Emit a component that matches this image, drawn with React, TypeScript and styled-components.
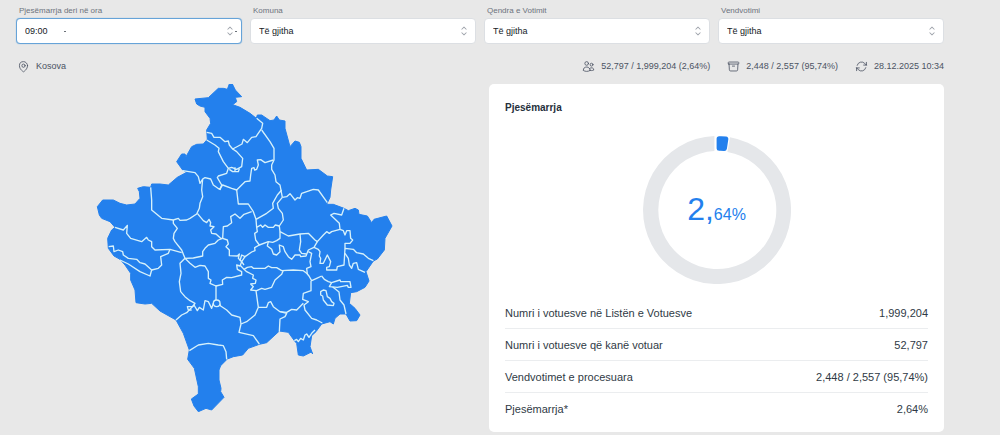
import React, { useId } from "react";
import styled, { createGlobalStyle } from "styled-components";
import {
  HiChevronUpDown,
  HiOutlineArchiveBox,
  HiOutlineArrowPath,
  HiOutlineMapPin,
  HiOutlineUsers,
} from "react-icons/hi2";

const color = {
  page: "#e8e8e8",
  blue: "#2380ed",
  border: "#dcdfe3",
  focus: "#66a3d8",
  ring: "#e5e7ea",
  label: "#6d737d",
  meta: "#4b5363",
  text: "#2f3a45",
};

const GlobalStyle = createGlobalStyle`
  *, *::before, *::after { box-sizing: border-box; }
  body {
    margin: 0;
    background: ${color.page};
    color: ${color.text};
    font-family: "Liberation Sans", Arial, sans-serif;
  }
`;

const Page = styled.main`
  padding: 5px 56px 0 16px;
`;

const Filters = styled.form`
  display: grid;
  grid-template-columns: repeat(4, 1fr);
  gap: 8px;
`;

const Field = styled.div`
  display: flex;
  flex-direction: column;
  gap: 2px;
`;

const FieldLabel = styled.label`
  padding-left: 3px;
  font-size: 8px;
  line-height: 11px;
  color: ${color.label};
`;

const SelectBox = styled.div`
  position: relative;
  display: grid;

  svg {
    position: absolute;
    right: 5px;
    top: 6px;
    width: 14px;
    height: 14px;
    color: #9a9fa7;
    pointer-events: none;
  }
`;

const Select = styled.select<{ $active?: boolean }>`
  appearance: none;
  width: 100%;
  height: 26px;
  padding: 0 24px 0 8px;
  border: 1px solid ${(p) => (p.$active ? color.focus : color.border)};
  border-radius: 4px;
  background: #fff;
  box-shadow: ${(p) => (p.$active ? `0 0 1px ${color.focus}` : "none")};
  color: #15191e;
  font-family: inherit;
  font-size: 9px;
  outline: none;
`;

const Dot = styled.span<{ $side: "left" | "right" }>`
  position: absolute;
  top: 13px;
  ${(p) => (p.$side === "left" ? "left: 48px;" : "right: 5px;")}
  width: 2px;
  height: 1px;
  background: #6b7178;
`;

const MetaBar = styled.div`
  display: flex;
  align-items: center;
  justify-content: space-between;
  padding: 14px 0 10px 1px;
`;

const MetaGroup = styled.div`
  display: flex;
  gap: 17px;
`;

const MetaItem = styled.span`
  display: flex;
  align-items: center;
  gap: 6px;
  font-size: 9px;
  line-height: 16px;
  color: ${color.meta};

  svg {
    width: 13px;
    height: 13px;
  }
`;

const Columns = styled.div`
  display: grid;
  grid-template-columns: 1fr 1fr;
  gap: 18px;
`;

const MapArea = styled.section`
  display: flex;
  justify-content: center;
  align-items: flex-start;

  svg {
    width: 100%;
    max-width: 300px;
  }
`;

const Card = styled.section`
  padding: 16px 16px 8px;
  border-radius: 5px;
  background: #fff;
`;

const CardTitle = styled.h2`
  margin: 0;
  font-size: 10px;
  line-height: 16px;
  color: #252f3b;
`;

const Chart = styled.div`
  display: grid;
  place-items: center;
  padding: 20px 0 13px;

  > * {
    grid-area: 1 / 1;
  }
`;

const Percent = styled.div`
  padding-top: 4px;
  color: ${color.blue};
  font-size: 32px;
  line-height: 36px;

  small {
    font-size: 16px;
  }
`;

const Stats = styled.table`
  width: 100%;
  border-collapse: collapse;
  font-size: 11px;
  line-height: 16px;

  tr + tr {
    border-top: 1px solid #ebedef;
  }

  th,
  td {
    padding: 8px 0 7px;
    font-weight: 400;
    text-align: left;
  }

  td {
    text-align: right;
  }
`;

const outline =
  "M418 12L427 12 436 30 455 50 436 52 440 65 428 74 450 82 480 100 499 115 502 105 515 105 540 122 552 120 560 108 568 120 585 123 585 145 600 200 615 183 628 187 633 200 633 235 650 270 685 268 712 288 728 290 722 330 720 352 710 373 730 373 762 385 775 392 795 385 805 390 807 403 832 408 845 428 852 418 890 408 906 438 885 475 883 510 862 537 850 543 828 575 837 603 825 622 800 635 782 638 778 670 795 685 810 705 800 722 780 723 768 702 750 702 735 715 730 732 720 725 695 732 678 755 665 767 660 800 668 822 664 816 640 828 625 825 620 790 613 782 595 757 568 753 530 788 508 793 475 805 458 825 430 830 412 837 392 857 387 870 387 900 393 925 392 935 402 952 365 990 348 985 325 995 312 978 304 957 325 942 325 920 313 865 293 838 298 810 280 760 258 720 210 693 185 670 165 672 138 668 135 630 122 600 122 580 105 555 90 538 72 528 55 505 53 475 65 450 75 442 60 425 35 415 28 405 22 380 38 360 70 360 90 370 110 375 135 372 150 355 148 335 143 325 160 320 182 322 185 312 210 312 235 315 262 292 290 277 278 270 260 245 275 222 285 222 288 230 305 200 320 193 340 192 352 178 350 150 362 130 360 115 345 95 345 82 330 78 320 72 315 57 355 53 385 25 400 25 412 28Z";

const borders = [
  "M350 157L365 160 372 172 390 172 405 185 415 183 418 195 428 207 445 198 456 192 460 178 472 188 485 172 498 170 515 145 518 130 500 115",
  "M350 180L375 195 387 205 385 215 400 245 415 265 410 280 385 288 382 293 395 315 390 330",
  "M428 207L440 215 458 235 455 260 440 268 425 262 415 265M418 268L428 275 445 275 448 266M435 262L435 275",
  "M278 272L315 278 325 290 330 310 338 297 345 293 362 297 370 315 388 328 398 315 425 325 440 330 455 315 465 305 480 303 482 285 485 265 492 263 494 270 500 268 505 255 502 240 512 239 525 248 550 240",
  "M515 150L540 185 552 205 552 240 545 255 545 268 555 285 558 305 570 315 577 352",
  "M182 322L185 360 185 390 215 415 250 420 265 415 270 421 290 420 300 415 320 402 328 385 330 370 338 350 335 330 338 297",
  "M322 400L340 422 350 428 357 418 362 428 360 438 372 440 362 450 365 460 378 462 392 475 398 475",
  "M398 475L400 440 412 438 425 428 422 410 435 402 450 415 462 403 485 395",
  "M440 330L443 355 445 372 475 372 490 395 498 418 530 400 550 385 548 370 562 345 575 330",
  "M577 352L562 370 565 385 577 400 580 420 568 438 570 455 595 468 630 462 655 460 675 480 682 485 700 465 710 455 718 460 725 455 750 448 748 430 722 405 732 400 755 405 762 385",
  "M577 352L590 350 600 341 615 360 622 353 630 355 635 340 670 328 685 330 712 368",
  "M498 418L500 442 512 435 518 442 525 435 535 442 550 442 556 435 568 438M500 442L502 455 494 460 497 480 508 495 535 485 548 487 560 482 570 475 570 455",
  "M508 495L494 503 495 512 485 516 465 530 455 525 450 542",
  "M535 485L532 498 545 508 550 522 560 525 570 515 568 495 580 500 585 515 595 530 605 538 615 525 630 525 632 530 648 528 655 510 672 502 682 485",
  "M630 462L632 485 628 510 635 520 650 522",
  "M655 515L665 520 660 545 663 560 650 565 652 582 657 588 665 602 680 595 695 588",
  "M672 502L685 508 690 515 688 528 692 535 690 550 700 550 712 525 722 545 718 560 710 562 710 570 740 570 742 560 762 555 765 505 790 508 800 518 820 522 835 535 850 542",
  "M750 448L760 452 765 465 770 452 780 452 782 475 788 480 780 490 765 490 765 505",
  "M765 520L775 535 778 555 785 565 790 550 800 548 805 568 825 577",
  "M695 588L703 598 715 605 725 608",
  "M725 608L750 600 752 605 780 605 783 622 775 622 772 616 742 622 718 620 725 608",
  "M728 621L737 628 747 636 750 660 762 675 768 702",
  "M692 635L700 630 708 632 712 650 720 655 725 665 732 670 730 677 712 675 700 660 698 648 692 645Z",
  "M450 555L462 568 472 562 485 560 490 565 510 565 525 565 535 558 545 563 560 563 575 572 610 570 640 572 653 582",
  "M462 568L470 575 490 585 488 595 498 600 496 610 482 612 490 620 482 630 500 632 515 625 525 628 545 622 555 600 575 583 580 571",
  "M498 632L505 682 495 705 470 725 453 732 447 757 490 767 508 792",
  "M663 602L663 632 640 640 638 658 655 665 642 675 645 690 665 715 680 720 697 729",
  "M505 682L530 682 535 668 542 665 550 680 570 695 590 697 605 688 620 690 640 670",
  "M570 695L590 700 585 710 570 717 568 755",
  "M613 782L620 778 625 785 632 775 640 780 645 765 650 762 657 772 665 760 675 750",
  "M453 732L450 712 425 705 410 690 392 678 385 662 380 675 370 670 365 685 355 665 345 662 340 690 328 682 322 692 312 675 290 698 275 705 258 720",
  "M285 535L270 550 273 580 268 605 272 635 285 650 300 662 315 670 308 680 292 680 295 690 305 690",
  "M378 615L378 660",
  "M285 535L310 534 338 528 338 515 345 505 355 495 375 490 385 480 398 475",
  "M285 535L300 550 315 562 330 556 345 558 355 575 355 595 363 600 360 610 378 618 398 613 397 600 410 592 425 593 455 585 455 575 442 568 440 555 450 558 455 545 462 555",
  "M398 475L412 480 415 492 408 500 418 510 418 527 442 528 448 522 445 535 455 545 465 530",
  "M250 420L250 430 262 445 252 460 250 475 255 485 275 510 285 535",
  "M75 442L100 450 112 436 110 460 122 475 155 485 170 472 175 480 185 485 185 500 195 510 240 508 275 518",
  "M56 500L70 498 72 515 85 510 98 515 100 525 115 535 140 538 150 548 165 552 185 570 180 588 150 575 115 552 90 540",
  "M185 570L205 565 215 555 212 530 235 520 240 508",
  "M298 812L325 795 355 790 385 795 400 797 408 815 410 838",
];

function KosovoMap() {
  return (
    <svg viewBox="12 12 900 984" role="img" aria-label="Kosova">
      <path d={outline} fill={color.blue} stroke={color.blue} strokeWidth="3" strokeLinejoin="round" />
      <g fill="none" stroke="#d6f1fb" strokeWidth="4" strokeLinejoin="round">
        {borders.map((d) => (
          <path key={d} d={d} />
        ))}
        <circle cx="380" cy="670" r="10" fill={color.blue} />
      </g>
    </svg>
  );
}

function TurnoutRing() {
  return (
    <svg width="148" height="148" viewBox="-74 -74 148 148" aria-hidden="true">
      <path
        d="M13 -72.8A74 74 0 1 1 -2.6 -73.9L-2.6 -58.9A59 59 0 1 0 10.4 -58.1Z"
        fill={color.ring}
      />
      <path
        d="M2.2 -73.8Q6 -74 9 -73.4Q11.6 -73 11.3 -70.6L9.9 -61.3Q9.4 -58.8 7 -59Q4.6 -59.4 2.4 -59.3Q-.4 -59.2 -.4 -61.6L-.4 -71.2Q-.4 -73.7 2.2 -73.8Z"
        fill={color.blue}
      />
    </svg>
  );
}

interface FilterProps {
  label: string;
  value: string;
  active?: boolean;
}

function Filter({ label, value, active }: FilterProps) {
  const id = useId();
  return (
    <Field>
      <FieldLabel htmlFor={id}>{label}</FieldLabel>
      <SelectBox>
        <Select id={id} $active={active}>
          <option>{value}</option>
        </Select>
        <HiChevronUpDown />
        {active && (
          <>
            <Dot $side="left" />
            <Dot $side="right" />
          </>
        )}
      </SelectBox>
    </Field>
  );
}

const stats = [
  ["Numri i votuesve në Listën e Votuesve", "1,999,204"],
  ["Numri i votuesve që kanë votuar", "52,797"],
  ["Vendvotimet e procesuara", "2,448 / 2,557 (95,74%)"],
  ["Pjesëmarrja*", "2,64%"],
];

export default function App() {
  return (
    <>
      <GlobalStyle />
      <Page>
        <Filters>
          <Filter label="Pjesëmarrja deri në ora" value="09:00" active />
          <Filter label="Komuna" value="Të gjitha" />
          <Filter label="Qendra e Votimit" value="Të gjitha" />
          <Filter label="Vendvotimi" value="Të gjitha" />
        </Filters>
        <MetaBar>
          <MetaItem>
            <HiOutlineMapPin />
            Kosova
          </MetaItem>
          <MetaGroup>
            <MetaItem>
              <HiOutlineUsers />
              52,797 / 1,999,204 (2,64%)
            </MetaItem>
            <MetaItem>
              <HiOutlineArchiveBox />
              2,448 / 2,557 (95,74%)
            </MetaItem>
            <MetaItem>
              <HiOutlineArrowPath />
              28.12.2025 10:34
            </MetaItem>
          </MetaGroup>
        </MetaBar>
        <Columns>
          <MapArea>
            <KosovoMap />
          </MapArea>
          <Card>
            <CardTitle>Pjesëmarrja</CardTitle>
            <Chart>
              <TurnoutRing />
              <Percent>
                2,<small>64%</small>
              </Percent>
            </Chart>
            <Stats>
              <tbody>
                {stats.map(([name, value]) => (
                  <tr key={name}>
                    <th scope="row">{name}</th>
                    <td>{value}</td>
                  </tr>
                ))}
              </tbody>
            </Stats>
          </Card>
        </Columns>
      </Page>
    </>
  );
}
